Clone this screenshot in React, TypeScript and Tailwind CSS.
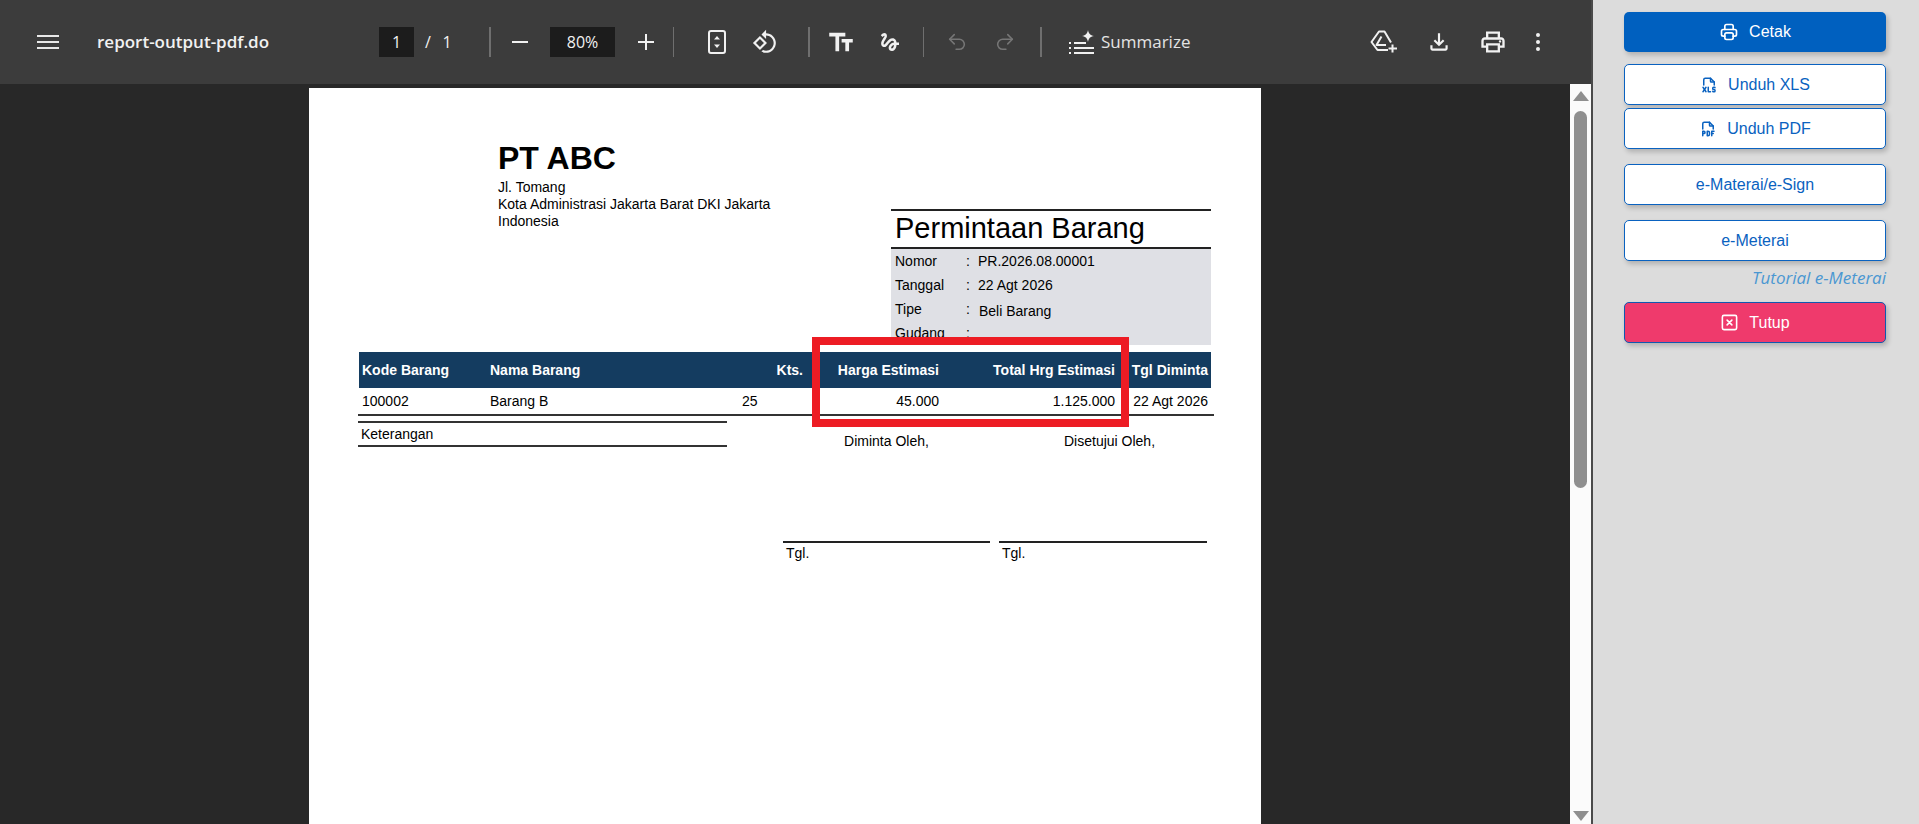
import { Redo2, Undo2 } from 'lucide-react'
import { TbFileTypePdf, TbFileTypeXls, TbPrinter, TbSquareX } from 'react-icons/tb'

const toolbarIcon = 'shrink-0 fill-current'

function Separator() {
  return <div className="h-[30px] w-[2px] shrink-0 bg-[#6f6f6f]" />
}

function Toolbar() {
  return (
    <div className="relative flex h-[84px] shrink-0 items-center bg-[#3c3c3c] text-[#f1f1f1] font-['Open_Sans',sans-serif]">
      {/* Menu + file name */}
      <div className="ml-[37px] flex h-[14px] w-[22px] shrink-0 flex-col justify-between">
        <div className="h-[2px] bg-[#e8e8e8]" />
        <div className="h-[2px] bg-[#e8e8e8]" />
        <div className="h-[2px] bg-[#e8e8e8]" />
      </div>
      <div className="ml-[38px] w-[282px] shrink-0 text-[17px] font-semibold">report-output-pdf.do</div>

      {/* Page number */}
      <div className="flex h-[30px] w-[35px] shrink-0 items-center justify-center bg-[#1c1c1c] text-[16px]">1</div>
      <div className="ml-[7px] w-[14px] shrink-0 text-center text-[16px]">/</div>
      <div className="ml-[7px] w-[10px] shrink-0 text-center text-[16px]">1</div>
      <div className="ml-[37px]"><Separator /></div>

      {/* Zoom */}
      <div className="ml-[21px] h-[2px] w-[16px] shrink-0 bg-[#f1f1f1]" />
      <div className="ml-[22px] flex h-[30px] w-[65px] shrink-0 items-center justify-center bg-[#1c1c1c] text-[16px]">80%</div>
      <svg className="ml-[23px] shrink-0" width="16" height="16" viewBox="0 0 16 16" fill="currentColor">
        <rect x="0" y="7" width="16" height="2" />
        <rect x="7" y="0" width="2" height="16" />
      </svg>
      <div className="ml-[19px] w-px h-[30px] shrink-0 bg-[#6f6f6f]" />

      {/* Fit + rotate */}
      <svg className="ml-[34px] shrink-0" width="18" height="24" viewBox="0 0 18 24" fill="none">
        <rect x="1" y="1" width="16" height="22" rx="2" stroke="currentColor" strokeWidth="2" />
        <path d="M9 6 L12 9.5 H6 Z M9 18 L6 14.5 H12 Z" fill="currentColor" />
      </svg>
      <svg className={`ml-[26px] ${toolbarIcon}`} width="26" height="26" viewBox="0 0 24 24">
        <path d="M7.34 6.41L.86 12.9l6.49 6.48 6.49-6.48-6.5-6.49zM3.69 12.9l3.66-3.66L11 12.9l-3.66 3.66-3.65-3.66zm15.67-6.26C17.61 4.88 15.3 4 13 4V.76L8.76 5 13 9.24V6c1.79 0 3.58.68 4.95 2.05 2.73 2.73 2.73 7.17 0 9.9C16.58 19.32 14.79 20 13 20c-.97 0-1.94-.21-2.84-.61l-1.49 1.49C10.02 21.62 11.51 22 13 22c2.3 0 4.61-.88 6.36-2.64 3.52-3.51 3.52-9.21 0-12.72z" />
      </svg>
      <div className="ml-[30px]"><Separator /></div>

      {/* Annotations */}
      <svg className={`ml-[18px] ${toolbarIcon}`} width="26" height="26" viewBox="1.5 3 21 17">
        <path d="M2.5 4v3h5v12h3V7h5V4h-13zm19 5h-9v3h3v7h3v-7h3V9z" />
      </svg>
      <svg className={`ml-[24px] ${toolbarIcon}`} width="24" height="24" viewBox="0 0 24 24">
        <path d="M4.59 6.89c.7-.71 1.4-1.35 1.71-1.22.5.2 0 1.03-.3 1.52-.25.42-2.86 3.89-2.86 6.31 0 1.28.48 2.34 1.34 2.98.75.56 1.74.73 2.64.46 1.07-.31 1.95-1.4 3.06-2.77 1.21-1.49 2.83-3.44 4.08-3.44 1.63 0 1.65 1.01 1.76 1.79-3.78.64-5.38 3.67-5.38 5.37 0 1.7 1.44 3.09 3.21 3.09 1.63 0 4.29-1.33 4.69-6.1H21v-2.5h-2.47c-.15-1.65-1.09-4.2-4.03-4.2-2.25 0-4.18 1.91-4.94 2.84-.58.73-2.06 2.48-2.29 2.72-.25.3-.68.84-1.11.84-.45 0-.72-.83-.36-1.92.35-1.09 1.4-2.86 1.85-3.52.78-1.14 1.3-1.92 1.3-3.28C8.95 3.69 7.31 3 6.44 3 5.12 3 3.97 4 3.72 4.25c-.36.36-.66.66-.88.93l1.75 1.71zm9.29 11.66c-.31 0-.74-.26-.74-.72 0-.6.73-2.2 2.87-2.76-.3 2.69-1.43 3.48-2.13 3.48z" />
      </svg>
      <div className="ml-[21px] h-[30px] w-px shrink-0 bg-[#6f6f6f]" />

      {/* Undo / redo */}
      <Undo2 className="ml-[22px] shrink-0 text-[#767676]" size={22} strokeWidth={1.7} />
      <Redo2 className="ml-[26px] shrink-0 text-[#767676]" size={22} strokeWidth={1.7} />
      <div className="ml-[24px]"><Separator /></div>

      {/* Summarize */}
      <svg className="ml-[27px] shrink-0" width="26" height="25" viewBox="0 0 26 25" fill="currentColor">
        <rect x="0" y="12" width="2" height="2" />
        <rect x="0" y="17" width="2" height="2" />
        <rect x="0" y="22" width="2" height="2" />
        <rect x="5" y="12" width="12" height="2" />
        <rect x="5" y="17" width="20" height="2" />
        <rect x="5" y="22" width="20" height="2" />
        <path d="M19 0 C19.6 3.6 21.2 5.4 25 6 C21.2 6.6 19.6 8.4 19 12 C18.4 8.4 16.8 6.6 13 6 C16.8 5.4 18.4 3.6 19 0 Z" />
      </svg>
      <div className="ml-[6px] w-[269px] shrink-0 text-[17px] text-[#e3e3e3]">Summarize</div>

      {/* Right actions */}
      <svg className="shrink-0" width="28" height="24" viewBox="0 0 28 24" fill="none" stroke="currentColor" strokeWidth="2" strokeLinejoin="round">
        <path d="M18 20 H7.5 L1.5 12 L9 1.5 H14.5 L21 12.5" />
        <path d="M11.5 6.5 L6.5 15 H16" />
        <path d="M22.5 14.5 V22.5 M18.5 18.5 H27" />
      </svg>
      <svg className={`ml-[28px] ${toolbarIcon}`} width="26" height="26" viewBox="0 0 24 24">
        <path d="M18 15v3H6v-3H4v3c0 1.1.9 2 2 2h12c1.1 0 2-.9 2-2v-3h-2zm-1-4l-1.41-1.41L13 12.17V4h-2v8.17L8.41 9.59 7 11l5 5 5-5z" />
      </svg>
      <svg className={`ml-[27px] ${toolbarIcon}`} width="28" height="28" viewBox="0 0 24 24">
        <path d="M19 8h-1V3H6v5H5c-1.66 0-3 1.34-3 3v6h4v4h12v-4h4v-6c0-1.66-1.34-3-3-3zM8 5h8v3H8V5zm8 12v2H8v-4h8v2zm2-2v-2H6v2H4v-4c0-.55.45-1 1-1h14c.55 0 1 .45 1 1v4h-2z" />
        <circle cx="18" cy="11.5" r="1" />
      </svg>
      <div className="ml-[29px] flex h-[18px] w-[5px] shrink-0 flex-col justify-between">
        <div className="h-[4px] w-[4px] rounded-full bg-[#f1f1f1]" />
        <div className="h-[4px] w-[4px] rounded-full bg-[#f1f1f1]" />
        <div className="h-[4px] w-[4px] rounded-full bg-[#f1f1f1]" />
      </div>
    </div>
  )
}

function InfoRow({ label, value, alt }: { label: string; value: string; alt?: boolean }) {
  return (
    <div className="flex h-[24px] items-center text-[14px]">
      <div className="w-[75px] pl-[4px]">{label}</div>
      <div className="w-[12px]">:</div>
      <div className={alt ? 'pl-[1px] pt-[4px]' : ''}>{value}</div>
    </div>
  )
}

function ReportPage() {
  return (
    <div className="relative h-[736px] w-[952px] shrink-0 overflow-hidden bg-white px-[50px] pt-[50px] text-black font-['Liberation_Sans',sans-serif]">
      {/* Company + document title */}
      <div className="flex">
        <div className="ml-[139px] leading-[17px] text-[14px]">
          <div className="mb-[1px] text-[32px] font-bold leading-[40px]">PT ABC</div>
          <div>Jl. Tomang</div>
          <div>Kota Administrasi Jakarta Barat DKI Jakarta</div>
          <div>Indonesia</div>
        </div>
        <div className="ml-auto mt-[71px] w-[320px]">
          <div className="flex h-[40px] items-center border-y-2 border-[#222] pl-[4px] text-[29px]">Permintaan Barang</div>
          <div className="h-[96px] bg-[#dfe0e5]">
            <InfoRow label="Nomor" value="PR.2026.08.00001" />
            <InfoRow label="Tanggal" value="22 Agt 2026" />
            <InfoRow label="Tipe" value="Beli Barang" alt />
            <InfoRow label="Gudang" value="" />
          </div>
        </div>
      </div>

      {/* Items table */}
      <div className="mt-[7px] grid grid-cols-[128px_213px_106px_136px_176px_93px] text-[14px]">
        <div className="flex h-[36px] items-center bg-[#143c60] pl-[3px] font-bold text-white">Kode Barang</div>
        <div className="flex h-[36px] items-center bg-[#143c60] pl-[3px] font-bold text-white">Nama Barang</div>
        <div className="flex h-[36px] items-center justify-end bg-[#143c60] pr-[3px] font-bold text-white">Kts.</div>
        <div className="flex h-[36px] items-center justify-end bg-[#143c60] pr-[3px] font-bold text-white">Harga Estimasi</div>
        <div className="flex h-[36px] items-center justify-end bg-[#143c60] pr-[3px] font-bold text-white">Total Hrg Estimasi</div>
        <div className="flex h-[36px] items-center justify-end whitespace-nowrap bg-[#143c60] pr-[3px] font-bold text-white">Tgl Diminta</div>
        <div className="flex h-[26px] items-center pl-[3px]">100002</div>
        <div className="flex h-[26px] items-center pl-[3px]">Barang B</div>
        <div className="flex h-[26px] items-center pl-[42px]">25</div>
        <div className="flex h-[26px] items-center justify-end pr-[3px]">45.000</div>
        <div className="flex h-[26px] items-center justify-end pr-[3px]">1.125.000</div>
        <div className="flex h-[26px] items-center justify-end whitespace-nowrap pr-[3px]">22 Agt 2026</div>
      </div>
      <div className="-ml-px h-[2px] w-[856px] bg-[#333]" />

      {/* Notes + signatures */}
      <div className="mt-[5px] flex text-[14px]">
        <div className="-ml-px h-[26px] w-[369px] shrink-0 border-y-2 border-[#333] pl-[3px] leading-[22px]">Keterangan</div>
        <div className="ml-[56px] w-[207px] shrink-0">
          <div className="mt-[10px] text-center leading-[20px]">Diminta Oleh,</div>
          <div className="mt-[90px] border-t-2 border-[#222] pl-[3px] leading-[20px]">Tgl.</div>
        </div>
        <div className="ml-[9px] w-[208px] shrink-0">
          <div className="mt-[10px] pl-[65px] leading-[20px]">Disetujui Oleh,</div>
          <div className="mt-[90px] border-t-2 border-[#222] pl-[3px] leading-[20px]">Tgl.</div>
        </div>
      </div>

      {/* Red highlight drawn over the screenshot */}
      <div className="absolute left-[503px] top-[249px] h-[90px] w-[317px] border-[8px] border-[#ed1c24]" />
    </div>
  )
}

function Scrollbar() {
  return (
    <div className="flex w-[21px] shrink-0 flex-col items-center bg-[#fbfbfb]">
      <div className="mt-[7px] h-0 w-0 border-x-[8px] border-b-[10px] border-x-transparent border-b-[#8f8f8f]" />
      <div className="mt-[10px] h-[377px] w-[13px] rounded-full bg-[#8f8f8f]" />
      <div className="mt-auto mb-[3px] h-0 w-0 border-x-[8px] border-t-[10px] border-x-transparent border-t-[#8f8f8f]" />
    </div>
  )
}

const outlineBtn =
  'flex h-[41px] w-full items-center justify-center gap-[10px] rounded-[5px] border border-[#0a62c0] bg-white text-[16px] text-[#0a62c0] shadow-[2px_3px_5px_rgba(0,0,0,0.2)]'

function ActionPanel() {
  return (
    <div className="flex flex-1 flex-col bg-[#dcdcdc] pl-[31px] pr-[33px] pt-[12px] font-['Liberation_Sans',sans-serif]">
      <div className="flex h-[40px] items-center justify-center gap-[10px] rounded-[5px] bg-[#0060bf] text-[16px] text-white shadow-[2px_3px_5px_rgba(0,0,0,0.2)]">
        <TbPrinter size={20} />
        Cetak
      </div>
      <div className={`${outlineBtn} mt-[12px]`}>
        <TbFileTypeXls size={18} />
        Unduh XLS
      </div>
      <div className={`${outlineBtn} mt-[3px]`}>
        <TbFileTypePdf size={18} />
        Unduh PDF
      </div>
      <div className={`${outlineBtn} mt-[15px]`}>e-Materai/e-Sign</div>
      <div className={`${outlineBtn} mt-[15px]`}>e-Meterai</div>
      <div className="mt-[7px] h-[27px] text-right text-[17px] italic leading-[20px] text-[#4a97d2] font-['Open_Sans',sans-serif]">
        Tutorial e-Meterai
      </div>
      <div className="mt-[7px] flex h-[41px] items-center justify-center gap-[10px] rounded-[5px] border border-[#1058b0] bg-[#ef3a6c] text-[16px] text-white shadow-[2px_3px_5px_rgba(0,0,0,0.2)]">
        <TbSquareX size={19} />
        Tutup
      </div>
    </div>
  )
}

export default function App() {
  return (
    <div className="flex h-[824px] w-[1919px] overflow-hidden">
      <div className="flex w-[1591px] shrink-0 flex-col">
        <Toolbar />
        <div className="flex min-h-0 flex-1">
          <div className="flex flex-1 justify-center bg-[#282828] pt-[4px]">
            <ReportPage />
          </div>
          <Scrollbar />
        </div>
      </div>
      <div className="w-[2px] shrink-0 bg-[#4a4a4a]" />
      <ActionPanel />
    </div>
  )
}
